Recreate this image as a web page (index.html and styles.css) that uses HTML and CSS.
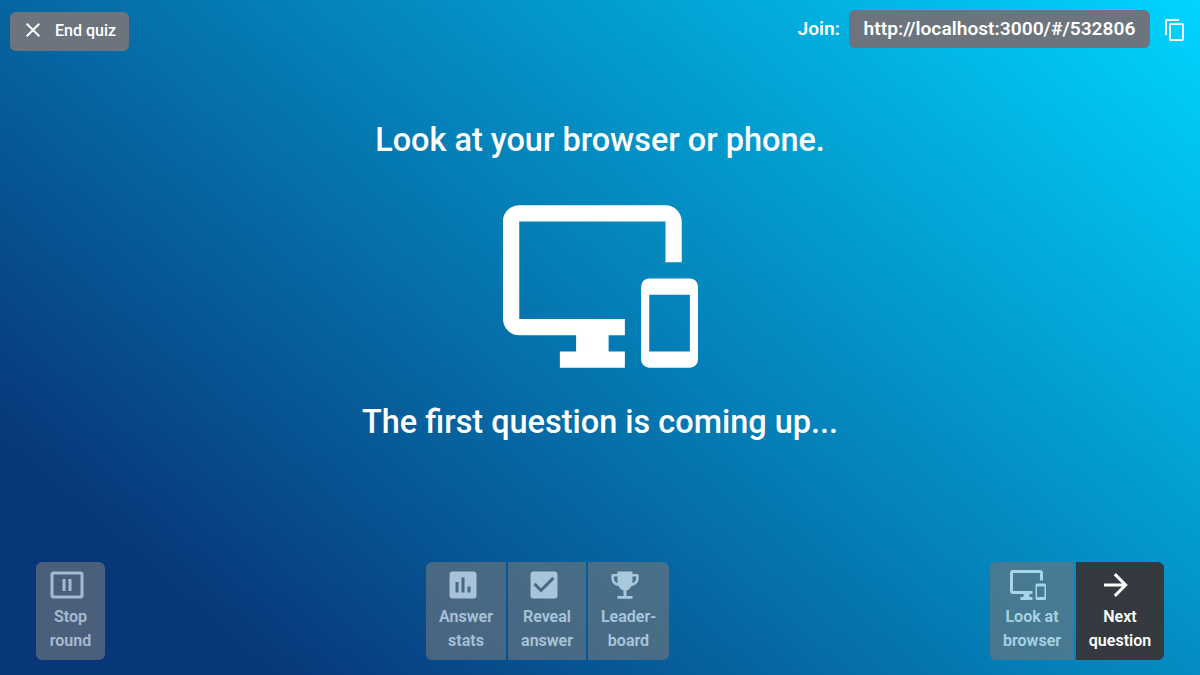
FILE: index.html
```
<!DOCTYPE html>
<html lang="en">
<head>
<meta charset="utf-8">
<title>Quiz</title>
<link rel="stylesheet" href="styles.css">
</head>
<body>
<div class="page">
  <header class="top">
    <button class="end">
      <svg class="icon24" viewBox="0 0 24 24"><path d="M19,6.41L17.59,5L12,10.59L6.41,5L5,6.41L10.59,12L5,17.59L6.41,19L12,13.41L17.59,19L19,17.59L13.41,12L19,6.41Z"/></svg>
      <span>End quiz</span>
    </button>
    <div class="join">
      <span class="join-label">Join:</span>
      <span class="url">http://localhost:3000/#/532806</span>
      <svg class="icon24" viewBox="0 0 24 24"><path d="M19,21H8V7H19M19,5H8A2,2 0 0,0 6,7V21A2,2 0 0,0 8,23H19A2,2 0 0,0 21,21V7A2,2 0 0,0 19,5M16,1H4A2,2 0 0,0 2,3V17H4V3H16V1Z"/></svg>
    </div>
  </header>
  <main class="main">
    <h1 class="title">Look at your browser or phone.</h1>
    <svg class="hero" viewBox="0 0 24 24"><path d="M23,11H18A1,1 0 0,0 17,12V21A1,1 0 0,0 18,22H23A1,1 0 0,0 24,21V12A1,1 0 0,0 23,11M23,20H18V13H23V20M20,2H2C0.89,2 0,2.89 0,4V16A2,2 0 0,0 2,18H9V20H7V22H15V20H13V18H15V16H2V4H20V9H22V4C22,2.89 21.1,2 20,2Z"/></svg>
    <h1 class="title">The first question is coming up...</h1>
  </main>
  <footer class="controls">
    <div class="group">
      <button class="ctl stop" disabled>
        <svg class="icon36" viewBox="0 0 24 24"><path fill-rule="evenodd" d="M3,3H21A2,2 0 0,1 23,5V19A2,2 0 0,1 21,21H3A2,2 0 0,1 1,19V5A2,2 0 0,1 3,3M3,5V19H21V5ZM9,8H11V16H9ZM13,8H15V16H13Z"/></svg>
        <span>Stop<br>round</span>
      </button>
    </div>
    <div class="group middle">
      <button class="ctl answer" disabled>
        <svg class="icon36" viewBox="0 0 24 24"><path d="M17,17H15V13H17M13,17H11V7H13M9,17H7V10H9M19,3H5C3.890,3 3,3.890 3,5V19A2,2 0 0,0 5,21H19A2,2 0 0,0 21,19V5C21,3.890 20.100,3 19,3Z"/></svg>
        <span>Answer<br>stats</span>
      </button>
      <button class="ctl reveal" disabled>
        <svg class="icon36" viewBox="0 0 24 24"><path d="M10,17L5,12L6.410,10.580L10,14.170L17.590,6.580L19,8M19,3H5C3.890,3 3,3.890 3,5V19A2,2 0 0,0 5,21H19A2,2 0 0,0 21,19V5C21,3.890 20.100,3 19,3Z"/></svg>
        <span>Reveal<br>answer</span>
      </button>
      <button class="ctl leader" disabled>
        <svg class="icon36" viewBox="0 0 36 36"><path fill-rule="evenodd" d="M10.500,4.500H25.500V7H30Q31.700,7 31.700,8.700V11C31.700,15.500 28.500,18.500 24.500,19C23.300,21.500 21.500,23 19.500,23.500V29H25.500V31.800H10.500V29H16.500V23.500C14.500,23 12.700,21.500 11.500,19C7.500,18.500 4.300,15.500 4.300,11V8.700Q4.300,7 6,7H10.500ZM10.500,9.500H6.900V11C6.900,13.500 8.300,15.500 10.500,16.300ZM25.500,9.500V16.300C27.700,15.500 29.100,13.500 29.100,11V9.500Z"/></svg>
        <span>Leader-<br>board</span>
      </button>
    </div>
    <div class="group right">
      <button class="ctl look" disabled>
        <svg class="icon36" viewBox="0 0 24 24"><path d="M23,11H18A1,1 0 0,0 17,12V21A1,1 0 0,0 18,22H23A1,1 0 0,0 24,21V12A1,1 0 0,0 23,11M23,20H18V13H23V20M20,2H2C0.890,2 0,2.890 0,4V16A2,2 0 0,0 2,18H9V20H7V22H15V20H13V18H15V16H2V4H20V9H22V4C22,2.890 21.100,2 20,2Z"/></svg>
        <span>Look at<br>browser</span>
      </button>
      <button class="ctl next">
        <svg class="icon36" viewBox="0 0 24 24"><path d="M4,11V13H16L10.500,18.500L11.920,19.920L19.840,12L11.920,4.080L10.500,5.500L16,11H4Z"/></svg>
        <span>Next<br>question</span>
      </button>
    </div>
  </footer>
</div>
</body>
</html>
```
FILE: styles.css
```
* { box-sizing: border-box; }
body { margin: 0; font-family: Roboto, sans-serif; font-weight: 500; color: #fff; }
svg { display: block; flex: none; fill: currentColor; }
button { font: inherit; color: inherit; border: 0; margin: 0; }
.page {
  width: 1200px; height: 675px; overflow: hidden;
  display: flex; flex-direction: column;
  background: linear-gradient(41deg, #083779 13.5%, #00d4ff 100%);
}
.icon24 { width: 24px; height: 24px; }
.icon36 { width: 36px; height: 36px; }
.top { display: flex; justify-content: space-between; align-items: flex-start; height: 115px; padding: 10px 13px 0 10px; }
.end {
  display: flex; align-items: center; gap: 10px; width: 119px; height: 39px; margin-top: 2px;
  padding: 0 0 2px 11px; border-radius: 6px; background: #6c757d; font-size: 16px; white-space: nowrap;
}
.end svg { margin-bottom: 1px; }
.join { display: flex; align-items: center; font-size: 19.2px; font-weight: 600; white-space: nowrap; }
.join-label { margin: 0 9px 2px 0; }
.join svg { margin-top: 2px; }
.url { width: 301px; height: 38px; line-height: 37px; margin-right: 13px; border-radius: 6px; background: #6c757d; text-align: center; }
.main { flex: 1; display: flex; flex-direction: column; align-items: center; }
.title { margin: 0; height: 50px; line-height: 50px; font-size: 32.45px; font-weight: 550; white-space: nowrap; }
.hero { width: 195px; height: 195px; margin: 24px 0 13px; }
.controls { display: grid; grid-template-columns: 390px 1fr auto; height: 113px; padding: 0 36px; }
.group { display: flex; height: 98px; gap: 2px; }
.ctl {
  display: flex; flex-direction: column; align-items: center; padding: 5px 0 0;
  background: #6c757d; font-size: 16px; font-weight: 600; line-height: 24px; text-align: center; white-space: nowrap;
}
.ctl svg { margin: 0 7px 2px 0; }
.ctl:disabled { opacity: .65; }
.ctl:first-child { border-radius: 6px 0 0 6px; }
.ctl:last-child { border-radius: 0 6px 6px 0; }
.ctl:only-child { border-radius: 6px; }
.stop { width: 69px; }
.answer { width: 80px; }
.reveal { width: 78px; }
.leader { width: 81px; }
.look { width: 84px; }
.next { width: 88px; background: #343a40; }
.right .ctl svg { margin-right: 8px; }
```
